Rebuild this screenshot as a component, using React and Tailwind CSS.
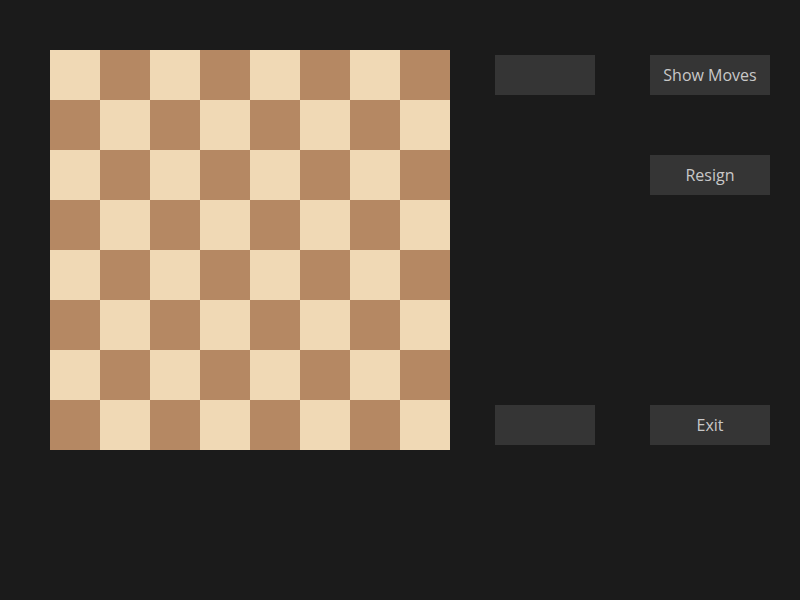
import React from 'react';

const LIGHT = 'bg-[#f0d9b5]';
const DARK = 'bg-[#b58863]';

function Board() {
  const squares = [];
  for (let r = 0; r < 8; r++) {
    for (let c = 0; c < 8; c++) {
      squares.push(
        <div key={`${r}-${c}`} className={`w-[50px] h-[50px] ${(r + c) % 2 === 0 ? LIGHT : DARK}`} />
      );
    }
  }
  return <div className="grid grid-cols-8 w-[400px] h-[400px] shrink-0">{squares}</div>;
}

function Btn({ label }) {
  return (
    <button className="w-[120px] h-[40px] bg-[#353535] text-[#c8c8c8] text-[16px] leading-none flex items-center justify-center">
      {label}
    </button>
  );
}

export default function App() {
  return (
    <div className="w-[800px] h-[600px] bg-[#1b1b1b] p-[50px] flex" style={{ fontFamily: '"Open Sans", "Noto Sans", sans-serif' }}>
      <Board />
      <div className="ml-[45px] h-[400px] py-[5px] flex flex-col justify-between">
        <div className="w-[100px] h-[40px] bg-[#353535]" />
        <div className="w-[100px] h-[40px] bg-[#353535]" />
      </div>
      <div className="ml-[55px] h-[400px] py-[5px] flex flex-col">
        <Btn label="Show Moves" />
        <div className="mt-[60px]"><Btn label="Resign" /></div>
        <div className="mt-auto"><Btn label="Exit" /></div>
      </div>
    </div>
  );
}
